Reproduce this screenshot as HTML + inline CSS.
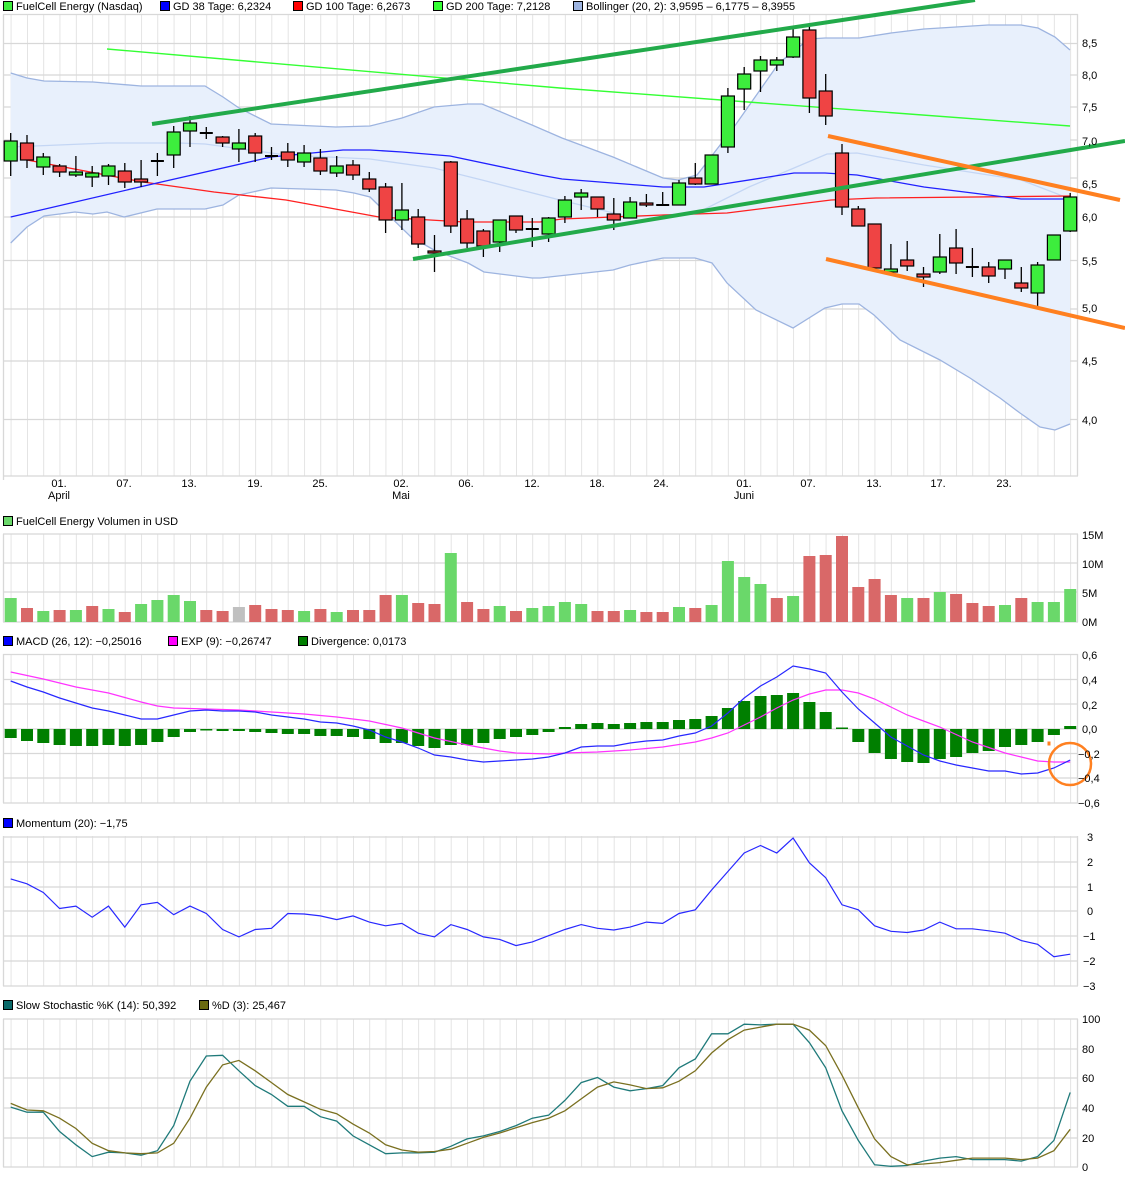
<!DOCTYPE html>
<html><head><meta charset="utf-8"><style>
html,body{margin:0;padding:0;background:#fff}
svg{display:block}
text{font-family:"Liberation Sans",sans-serif;font-size:11px;fill:#000}
.g{fill:#3ded3d;stroke:#000;stroke-width:1.2}
.r{fill:#ef4444;stroke:#000;stroke-width:1.2}
.vg{fill:#6ad86a}.vr{fill:#d96868}.vx{fill:#c0c0c0}
.hg{stroke:#d8d8d8;stroke-width:1.3}
.pl{fill:none}
</style></head><body>
<svg width="1125" height="1179" viewBox="0 0 1125 1179" xmlns="http://www.w3.org/2000/svg">
<defs>
<pattern id="vgrid" patternUnits="userSpaceOnUse" x="10.7" y="0" width="16.3" height="1179">
<rect x="-0.6" y="0" width="1.3" height="1179" fill="#d8d8d8"/>
</pattern>
</defs>

<!-- Legends -->
<g>
<rect x="3.5" y="1.5" width="9" height="9" fill="#3ded3d" stroke="#000"/><text x="16" y="10">FuelCell Energy (Nasdaq)</text>
<rect x="160.5" y="1.5" width="9" height="9" fill="#0000ff" stroke="#000"/><text x="173" y="10">GD 38 Tage: 6,2324</text>
<rect x="293.5" y="1.5" width="9" height="9" fill="#ff0000" stroke="#000"/><text x="306" y="10">GD 100 Tage: 6,2673</text>
<rect x="433.5" y="1.5" width="9" height="9" fill="#33ff33" stroke="#000"/><text x="446" y="10">GD 200 Tage: 7,2128</text>
<rect x="573.5" y="1.5" width="9" height="9" fill="#9db4e0" stroke="#000"/><text x="586" y="10">Bollinger (20, 2): 3,9595 – 6,1775 – 8,3955</text>

<rect x="3.5" y="516.5" width="9" height="9" fill="#6ad86a" stroke="#000"/><text x="16" y="525">FuelCell Energy Volumen in USD</text>

<rect x="3.5" y="636.5" width="9" height="9" fill="#0000ff" stroke="#000"/><text x="16" y="645">MACD (26, 12): −0,25016</text>
<rect x="168.5" y="636.5" width="9" height="9" fill="#ff00ff" stroke="#000"/><text x="181" y="645">EXP (9): −0,26747</text>
<rect x="298.5" y="636.5" width="9" height="9" fill="#007f00" stroke="#000"/><text x="311" y="645">Divergence: 0,0173</text>

<rect x="3.5" y="818.5" width="9" height="9" fill="#0000ff" stroke="#000"/><text x="16" y="827">Momentum (20): −1,75</text>

<rect x="3.5" y="1000.5" width="9" height="9" fill="#0a6a6a" stroke="#000"/><text x="16" y="1009">Slow Stochastic %K (14): 50,392</text>
<rect x="199.5" y="1000.5" width="9" height="9" fill="#6b6b10" stroke="#000"/><text x="212" y="1009">%D (3): 25,467</text>
</g>

<!-- Vertical grids -->
<rect x="3" y="14" width="1075" height="462" fill="url(#vgrid)"/>
<rect x="3" y="534" width="1075" height="88" fill="url(#vgrid)"/>
<rect x="3" y="654" width="1075" height="149" fill="url(#vgrid)"/>
<rect x="3" y="836" width="1075" height="150" fill="url(#vgrid)"/>
<rect x="3" y="1019" width="1075" height="148" fill="url(#vgrid)"/>

<!-- Horizontal grids + frames -->
<g class="hg">
<path d="M3 14.5H1078M3 43.5H1078M3 75H1078M3 107H1078M3 140H1078M3 178H1078M3 217H1078M3 260.5H1078M3 309H1078M3 361H1078M3 419.5H1078M3 476H1078M3.5 14V480M1077.5 14V476"/>
<path d="M3 534H1078M3 563H1078M3 592H1078M3 622H1078M3.5 534V622M1077.5 534V622"/>
<path d="M3 654.5H1078M3 679.5H1078M3 704H1078M3 729H1078M3 753.5H1078M3 778H1078M3 803H1078M3.5 654V803M1077.5 654V803"/>
<path d="M3 837H1078M3 862H1078M3 887H1078M3 911H1078M3 936H1078M3 961H1078M3 986H1078M3.5 836V986M1077.5 836V986"/>
<path d="M3 1019H1078M3 1049H1078M3 1078H1078M3 1108H1078M3 1138H1078M3 1167H1078M3.5 1019V1167M1077.5 1019V1167"/>
</g>

<!-- Bollinger -->
<polygon fill="#e8f0fc" points="10.7,73 27,78 44,81 93,82 141,86 205,86 223,97 239,108 271,124 336,127 370,126 402,118 434,107 468,104 482,104 532,125 562,138 613,157 663,178 678,180 697,175 734,127 779,63 809,39 825,38 859,38 891,33 924,29 988,25 1021,25 1038,28 1055,37 1070,50 1070,424 1055,430 1040,427 1020,413 1000,398 970,378 940,360 900,340 874,315 859,304 842,304 825,308 793,328 756,310 727,283 712,263 695,258 663,258 630,265 613,270 540,278 532,278 484,272 468,263 434,250 411,237 370,197 354,193 336,190 271,188 239,195 223,205 205,209 157,209 124,217 107,212 93,214 75,212 44,216 27,227 10.7,243"/>
<polyline class="pl" stroke="#9db4e0" stroke-width="1.3" points="10.7,73 27,78 44,81 93,82 141,86 205,86 223,97 239,108 271,124 336,127 370,126 402,118 434,107 468,104 482,104 532,125 562,138 613,157 663,178 678,180 697,175 734,127 779,63 809,39 825,38 859,38 891,33 924,29 988,25 1021,25 1038,28 1055,37 1070,50"/>
<polyline class="pl" stroke="#9db4e0" stroke-width="1.3" points="10.7,243 27,227 44,216 75,212 93,214 107,212 124,217 157,209 205,209 223,205 239,195 271,188 336,190 354,193 370,197 411,237 434,250 468,263 484,272 532,278 540,278 613,270 630,265 663,258 695,258 712,263 727,283 756,310 793,328 825,308 842,304 859,304 874,315 900,340 940,360 970,378 1000,398 1020,413 1040,427 1055,430 1070,424"/>
<polyline class="pl" stroke="#c4d6f4" stroke-width="1.3" points="10.7,147 107,143 179,143 205,144 286,155 370,159 434,168 482,180 560,200 630,217 697,213 749,187 794,168 827,154 857,153 924,165 1021,180 1055,193 1070,199"/>

<!-- Moving averages -->
<polyline class="pl" stroke="#33ff33" stroke-width="1.4" points="107,49 560,88 1070,126"/>
<polyline class="pl" stroke="#ff2020" stroke-width="1.3" points="27,160 143,182 214,192 286,200 379,217 464,222 540,222 562,219 663,215 727,213 831,200 876,198 1070,196"/>
<polyline class="pl" stroke="#2020ff" stroke-width="1.3" points="10.7,217 157,183 271,157 343,150 370,150 402,152 450,156 540,175 562,179 663,187 704,187 794,173 825,173 857,175 924,187 1021,199 1070,199"/>

<!-- Wicks -->
<path stroke="#000" stroke-width="1.3" fill="none" d="M10.7 133V176M27 135V168M43.3 153V175M59.6 164V177M75.9 156V177M92.2 166V187M108.5 164V185M124.8 163V188M141.1 160V187M157.4 153V176M173.7 126V168M190 116V147M206.3 127V139M222.6 136V147M238.9 129V162M255.2 133V162M271.5 147V160M287.8 143V167M304.1 145V167M320.4 149V175M336.7 156V177M353 160V180M369.3 172V192M385.6 183V233M401.9 183V230M418.2 209V248M434.5 235V272M450.8 161V233M467.1 210V248M483.4 229V257M499.7 220V252M516 216V233M532.3 218V247M548.6 217V242M564.9 196V223M581.2 189V210M597.5 197V217M613.8 198V230M630.1 197V218M646.4 194V207M662.7 192V206M679 180V205M695.3 163V185M711.6 155V184M727.9 88V153M744.2 67V110M760.5 56V92M776.8 57V71M793.1 29V58M809.4 23V113M825.7 74V125M842 144V215M858.3 206V226M874.6 224V268M890.9 244V272M907.2 241V271M923.5 267V287M939.8 234V274M956.1 229V274M972.4 248V277M988.7 262V283M1005 260V279M1021.3 267V292M1037.6 262V307M1053.9 235V260M1070.2 193V232"/>
<!-- Dojis -->
<path stroke="#000" stroke-width="2" d="M150.9 161H163.9M199.8 133H212.8M265 156H278M525.8 229H538.8M656.2 205H669.2M965.9 267H978.9"/>
<!-- Bodies -->
<g>
<rect class="g" x="4.2" y="141" width="13" height="20"/>
<rect class="r" x="20.5" y="143" width="13" height="17"/>
<rect class="g" x="36.8" y="157" width="13" height="10"/>
<rect class="r" x="53.1" y="166" width="13" height="6"/>
<rect class="g" x="69.4" y="172" width="13" height="3"/>
<rect class="g" x="85.7" y="173" width="13" height="4"/>
<rect class="g" x="102" y="166" width="13" height="10"/>
<rect class="r" x="118.3" y="171" width="13" height="11"/>
<rect class="r" x="134.6" y="179" width="13" height="3"/>
<rect class="g" x="167.2" y="132" width="13" height="23"/>
<rect class="g" x="183.5" y="123" width="13" height="8"/>
<rect class="r" x="216.1" y="137" width="13" height="6"/>
<rect class="g" x="232.4" y="143" width="13" height="6"/>
<rect class="r" x="248.7" y="136" width="13" height="17"/>
<rect class="r" x="281.3" y="152" width="13" height="8"/>
<rect class="g" x="297.6" y="153" width="13" height="9"/>
<rect class="r" x="313.9" y="158" width="13" height="13"/>
<rect class="g" x="330.2" y="166" width="13" height="7"/>
<rect class="r" x="346.5" y="165" width="13" height="10"/>
<rect class="r" x="362.8" y="179" width="13" height="10"/>
<rect class="r" x="379.1" y="187" width="13" height="33"/>
<rect class="g" x="395.4" y="210" width="13" height="10"/>
<rect class="r" x="411.7" y="217" width="13" height="27"/>
<rect class="r" x="428" y="251" width="13" height="2"/>
<rect class="r" x="444.3" y="162" width="13" height="64"/>
<rect class="r" x="460.6" y="219" width="13" height="24"/>
<rect class="r" x="476.9" y="231" width="13" height="15"/>
<rect class="g" x="493.2" y="220" width="13" height="22"/>
<rect class="r" x="509.5" y="216" width="13" height="14"/>
<rect class="g" x="542.1" y="218" width="13" height="16"/>
<rect class="g" x="558.4" y="200" width="13" height="17"/>
<rect class="g" x="574.7" y="193" width="13" height="4"/>
<rect class="r" x="591" y="197" width="13" height="12"/>
<rect class="r" x="607.3" y="214" width="13" height="6"/>
<rect class="g" x="623.6" y="202" width="13" height="16"/>
<rect class="r" x="639.9" y="203" width="13" height="2"/>
<rect class="g" x="672.5" y="183" width="13" height="22"/>
<rect class="r" x="688.8" y="178" width="13" height="6"/>
<rect class="g" x="705.1" y="155" width="13" height="29"/>
<rect class="g" x="721.4" y="96" width="13" height="51"/>
<rect class="g" x="737.7" y="74" width="13" height="15"/>
<rect class="g" x="754" y="60" width="13" height="11"/>
<rect class="g" x="770.3" y="60" width="13" height="5"/>
<rect class="g" x="786.6" y="37" width="13" height="20"/>
<rect class="r" x="802.9" y="30" width="13" height="68"/>
<rect class="r" x="819.2" y="91" width="13" height="25"/>
<rect class="r" x="835.5" y="153" width="13" height="54"/>
<rect class="r" x="851.8" y="209" width="13" height="17"/>
<rect class="r" x="868.1" y="224" width="13" height="44"/>
<rect class="g" x="884.4" y="269" width="13" height="3"/>
<rect class="r" x="900.7" y="260" width="13" height="6"/>
<rect class="r" x="917" y="274" width="13" height="3"/>
<rect class="g" x="933.3" y="257" width="13" height="15"/>
<rect class="r" x="949.6" y="248" width="13" height="15"/>
<rect class="r" x="982.2" y="267" width="13" height="9"/>
<rect class="g" x="998.5" y="260" width="13" height="9"/>
<rect class="r" x="1014.8" y="283" width="13" height="5"/>
<rect class="g" x="1031.1" y="265" width="13" height="28"/>
<rect class="g" x="1047.4" y="235" width="13" height="25"/>
<rect class="g" x="1063.7" y="197" width="13" height="34"/>
</g>

<!-- Trend lines -->
<g stroke-width="4" fill="none">
<line x1="152" y1="124" x2="975" y2="0" stroke="#22aa4a"/>
<line x1="413" y1="259" x2="1125" y2="141" stroke="#22aa4a"/>
<line x1="828" y1="136" x2="1120" y2="200" stroke="#ff8020"/>
<line x1="826" y1="259" x2="1125" y2="328" stroke="#ff8020"/>
</g>

<!-- Main y labels -->
<g>
<text x="1082" y="47">8,5</text><text x="1082" y="79">8,0</text><text x="1082" y="111">7,5</text><text x="1082" y="145">7,0</text>
<text x="1082" y="188">6,5</text><text x="1082" y="221">6,0</text><text x="1082" y="265">5,5</text><text x="1082" y="312">5,0</text>
<text x="1082" y="365">4,5</text><text x="1082" y="424">4,0</text>
</g>
<!-- X labels -->
<g text-anchor="middle">
<text x="59" y="487">01.</text><text x="59" y="499">April</text>
<text x="124" y="487">07.</text><text x="189" y="487">13.</text><text x="255" y="487">19.</text><text x="320" y="487">25.</text>
<text x="401" y="487">02.</text><text x="401" y="499">Mai</text>
<text x="466" y="487">06.</text><text x="532" y="487">12.</text><text x="597" y="487">18.</text><text x="661" y="487">24.</text>
<text x="744" y="487">01.</text><text x="744" y="499">Juni</text>
<text x="808" y="487">07.</text><text x="874" y="487">13.</text><text x="938" y="487">17.</text><text x="1004" y="487">23.</text>
</g>

<!-- Volume -->
<g>
<rect class="vg" x="4.7" y="598" width="12" height="24"/><rect class="vr" x="21" y="608" width="12" height="14"/><rect class="vg" x="37.3" y="611" width="12" height="11"/><rect class="vr" x="53.6" y="610" width="12" height="12"/><rect class="vg" x="69.9" y="610" width="12" height="12"/><rect class="vr" x="86.2" y="606" width="12" height="16"/><rect class="vg" x="102.5" y="609" width="12" height="13"/><rect class="vr" x="118.8" y="612" width="12" height="10"/><rect class="vg" x="135.1" y="604" width="12" height="18"/><rect class="vg" x="151.4" y="600" width="12" height="22"/>
<rect class="vg" x="167.7" y="595" width="12" height="27"/><rect class="vg" x="184" y="601" width="12" height="21"/><rect class="vr" x="200.3" y="610" width="12" height="12"/><rect class="vr" x="216.6" y="611" width="12" height="11"/><rect class="vx" x="232.9" y="607" width="12" height="15"/><rect class="vr" x="249.2" y="605" width="12" height="17"/><rect class="vr" x="265.5" y="609" width="12" height="13"/><rect class="vr" x="281.8" y="610" width="12" height="12"/><rect class="vg" x="298.1" y="611" width="12" height="11"/><rect class="vr" x="314.4" y="609" width="12" height="13"/>
<rect class="vg" x="330.7" y="612" width="12" height="10"/><rect class="vr" x="347" y="610" width="12" height="12"/><rect class="vr" x="363.3" y="610" width="12" height="12"/><rect class="vr" x="379.6" y="595" width="12" height="27"/><rect class="vg" x="395.9" y="595" width="12" height="27"/><rect class="vr" x="412.2" y="603" width="12" height="19"/><rect class="vr" x="428.5" y="604" width="12" height="18"/><rect class="vg" x="444.8" y="553" width="12" height="69"/><rect class="vr" x="461.1" y="602" width="12" height="20"/><rect class="vr" x="477.4" y="609" width="12" height="13"/>
<rect class="vg" x="493.7" y="606" width="12" height="16"/><rect class="vr" x="510" y="611" width="12" height="11"/><rect class="vg" x="526.3" y="608" width="12" height="14"/><rect class="vg" x="542.6" y="606" width="12" height="16"/><rect class="vg" x="558.9" y="602" width="12" height="20"/><rect class="vg" x="575.2" y="604" width="12" height="18"/><rect class="vr" x="591.5" y="611" width="12" height="11"/><rect class="vr" x="607.8" y="611" width="12" height="11"/><rect class="vg" x="624.1" y="610" width="12" height="12"/><rect class="vr" x="640.4" y="612" width="12" height="10"/>
<rect class="vr" x="656.7" y="612" width="12" height="10"/><rect class="vg" x="673" y="607" width="12" height="15"/><rect class="vr" x="689.3" y="608" width="12" height="14"/><rect class="vg" x="705.6" y="605" width="12" height="17"/><rect class="vg" x="721.9" y="561" width="12" height="61"/><rect class="vg" x="738.2" y="577" width="12" height="45"/><rect class="vg" x="754.5" y="584" width="12" height="38"/><rect class="vr" x="770.8" y="598" width="12" height="24"/><rect class="vg" x="787.1" y="596" width="12" height="26"/><rect class="vr" x="803.4" y="556" width="12" height="66"/>
<rect class="vr" x="819.7" y="555" width="12" height="67"/><rect class="vr" x="836" y="536" width="12" height="86"/><rect class="vr" x="852.3" y="587" width="12" height="35"/><rect class="vr" x="868.6" y="579" width="12" height="43"/><rect class="vr" x="884.9" y="595" width="12" height="27"/><rect class="vg" x="901.2" y="598" width="12" height="24"/><rect class="vr" x="917.5" y="598" width="12" height="24"/><rect class="vg" x="933.8" y="592" width="12" height="30"/><rect class="vr" x="950.1" y="594" width="12" height="28"/><rect class="vr" x="966.4" y="603" width="12" height="19"/>
<rect class="vr" x="982.7" y="606" width="12" height="16"/><rect class="vg" x="999" y="605" width="12" height="17"/><rect class="vr" x="1015.3" y="598" width="12" height="24"/><rect class="vg" x="1031.6" y="602" width="12" height="20"/><rect class="vg" x="1047.9" y="602" width="12" height="20"/><rect class="vg" x="1064.2" y="589" width="12" height="33"/>
</g>
<g><text x="1082" y="539">15M</text><text x="1082" y="568">10M</text><text x="1082" y="597">5M</text><text x="1082" y="626">0M</text></g>

<!-- MACD divergence -->
<g fill="#007f00">
<rect x="4.7" y="729" width="12" height="9"/><rect x="21" y="729" width="12" height="12"/><rect x="37.3" y="729" width="12" height="14"/><rect x="53.6" y="729" width="12" height="16"/><rect x="69.9" y="729" width="12" height="17"/><rect x="86.2" y="729" width="12" height="17"/><rect x="102.5" y="729" width="12" height="16"/><rect x="118.8" y="729" width="12" height="17"/><rect x="135.1" y="729" width="12" height="16"/><rect x="151.4" y="729" width="12" height="13"/>
<rect x="167.7" y="729" width="12" height="8"/><rect x="184" y="729" width="12" height="3"/><rect x="200.3" y="729" width="12" height="1.5"/><rect x="216.6" y="729" width="12" height="2"/><rect x="232.9" y="729" width="12" height="2"/><rect x="249.2" y="729" width="12" height="3"/><rect x="265.5" y="729" width="12" height="4"/><rect x="281.8" y="729" width="12" height="5"/><rect x="298.1" y="729" width="12" height="5"/><rect x="314.4" y="729" width="12" height="7"/>
<rect x="330.7" y="729" width="12" height="7"/><rect x="347" y="729" width="12" height="8"/><rect x="363.3" y="729" width="12" height="10"/><rect x="379.6" y="729" width="12" height="14"/><rect x="395.9" y="729" width="12" height="14"/><rect x="412.2" y="729" width="12" height="17"/><rect x="428.5" y="729" width="12" height="19"/><rect x="444.8" y="729" width="12" height="16"/><rect x="461.1" y="729" width="12" height="16"/><rect x="477.4" y="729" width="12" height="14"/>
<rect x="493.7" y="729" width="12" height="10"/><rect x="510" y="729" width="12" height="8"/><rect x="526.3" y="729" width="12" height="6"/><rect x="542.6" y="729" width="12" height="3"/><rect x="558.9" y="727" width="12" height="2"/><rect x="575.2" y="724" width="12" height="5"/><rect x="591.5" y="723" width="12" height="6"/><rect x="607.8" y="724" width="12" height="5"/><rect x="624.1" y="723" width="12" height="6"/><rect x="640.4" y="722" width="12" height="7"/>
<rect x="656.7" y="722" width="12" height="7"/><rect x="673" y="720" width="12" height="9"/><rect x="689.3" y="719" width="12" height="10"/><rect x="705.6" y="716" width="12" height="13"/><rect x="721.9" y="708" width="12" height="21"/><rect x="738.2" y="701" width="12" height="28"/><rect x="754.5" y="696" width="12" height="33"/><rect x="770.8" y="695" width="12" height="34"/><rect x="787.1" y="693" width="12" height="36"/><rect x="803.4" y="702" width="12" height="27"/>
<rect x="819.7" y="712" width="12" height="17"/><rect x="836" y="727.5" width="12" height="1.5"/><rect x="852.3" y="729" width="12" height="13"/><rect x="868.6" y="729" width="12" height="24"/><rect x="884.9" y="729" width="12" height="30"/><rect x="901.2" y="729" width="12" height="33"/><rect x="917.5" y="729" width="12" height="34"/><rect x="933.8" y="729" width="12" height="30"/><rect x="950.1" y="729" width="12" height="28"/><rect x="966.4" y="729" width="12" height="24"/>
<rect x="982.7" y="729" width="12" height="22"/><rect x="999" y="729" width="12" height="18"/><rect x="1015.3" y="729" width="12" height="16"/><rect x="1031.6" y="729" width="12" height="13"/><rect x="1047.9" y="729" width="12" height="6"/><rect x="1064.2" y="726" width="12" height="3"/>
</g>
<polyline class="pl" stroke="#ff33ff" stroke-width="1.2" points="10.7,672 27,675.5 43.3,679 59.6,683 75.9,687 92.2,690 108.5,693 124.8,697.5 141.1,702 157.4,706 173.7,708 190,708.5 206.3,709 222.6,709.5 238.9,710 255.2,711 271.5,712 287.8,713 304.1,714 320.4,715.5 336.7,717 353,719 369.3,721 385.6,724.5 401.9,728 418.2,733 434.5,738 450.8,741.5 467.1,745 483.4,748 499.7,751 516,753 532.3,753.5 548.6,754 564.9,753 581.2,752.5 597.5,752 613.8,751 630.1,750 646.4,748.5 662.7,747 679,744.5 695.3,742 711.6,738 727.9,733 744.2,725 760.5,717 776.8,708 793.1,700 809.4,694 825.7,690 842,690 858.3,693 874.6,699 890.9,707 907.2,715 923.5,721 939.8,727 956.1,734.5 972.4,742 988.7,747.5 1005,753 1021.3,757 1037.6,761 1053.9,762 1070.2,762"/>
<polyline class="pl" stroke="#2828ff" stroke-width="1.2" points="10.7,681 27,687 43.3,692 59.6,698 75.9,703 92.2,708 108.5,711 124.8,715 141.1,719 157.4,719 173.7,715 190,711 206.3,710 222.6,711 238.9,711 255.2,712 271.5,715 287.8,717 304.1,719 320.4,722 336.7,723 353,726 369.3,730 385.6,737 401.9,742 418.2,748 434.5,755 450.8,757 467.1,760 483.4,762 499.7,761 516,760 532.3,759 548.6,757 564.9,753 581.2,747 597.5,746 613.8,746 630.1,743 646.4,741 662.7,740 679,736 695.3,733 711.6,726 727.9,713 744.2,698 760.5,686 776.8,677 793.1,666 809.4,669 825.7,673 842,692 858.3,709 874.6,723 890.9,737 907.2,746 923.5,755 939.8,761 956.1,765 972.4,768 988.7,771 1005,771 1021.3,774 1037.6,773 1053.9,768 1070.2,760"/>
<circle cx="1070" cy="764" r="21" fill="none" stroke="#ff8020" stroke-width="2.5"/>
<rect x="1047.5" y="741.5" width="3" height="4" fill="#ff8020"/>
<g><text x="1082" y="659">0,6</text><text x="1082" y="684">0,4</text><text x="1082" y="709">0,2</text><text x="1082" y="733">0,0</text><text x="1078" y="758">−0,2</text><text x="1078" y="782">−0,4</text><text x="1078" y="807">−0,6</text></g>

<!-- Momentum -->
<polyline class="pl" stroke="#2828ff" stroke-width="1.2" points="10.7,878.9 27,883.8 43.3,892.5 59.6,908.5 75.9,906.1 92.2,917.2 108.5,906.1 124.8,927.1 141.1,904.8 157.4,902.4 173.7,914.7 190,906.1 206.3,913.5 222.6,929.5 238.9,936.9 255.2,929.5 271.5,928.3 287.8,913.5 304.1,914 320.4,915.9 336.7,919.6 353,915.9 369.3,922.1 385.6,925.8 401.9,923.4 418.2,933.2 434.5,936.9 450.8,924.6 467.1,929.5 483.4,936.9 499.7,939.4 516,945.6 532.3,941.9 548.6,935.7 564.9,929.5 581.2,924.6 597.5,928.3 613.8,930 630.1,927.1 646.4,922.1 662.7,923.4 679,913.5 695.3,909.8 711.6,890 727.9,871.5 744.2,853 760.5,845.5 776.8,853 793.1,838.1 809.4,862.8 825.7,877.7 842,904.8 858.3,909.8 874.6,925.8 890.9,931.3 907.2,932.5 923.5,930 939.8,922.1 956.1,928.8 972.4,928.8 988.7,930.8 1005,933.2 1021.3,940.6 1037.6,944.3 1053.9,956.7 1070.2,954.2"/>
<g><text x="1087" y="841">3</text><text x="1087" y="866">2</text><text x="1087" y="891">1</text><text x="1087" y="915">0</text><text x="1083" y="940">−1</text><text x="1083" y="965">−2</text><text x="1083" y="990">−3</text></g>

<!-- Stochastic -->
<polyline class="pl" stroke="#1f7a7a" stroke-width="1.3" points="10.7,1107.1 27,1112.2 43.3,1112.2 59.6,1131.5 75.9,1144.8 92.2,1156.6 108.5,1152.2 124.8,1152.9 141.1,1155.2 157.4,1150.7 173.7,1125.6 190,1081.2 206.3,1056 222.6,1055.3 238.9,1070.8 255.2,1085.6 271.5,1094.5 287.8,1106.3 304.1,1106.3 320.4,1116.7 336.7,1121.1 353,1135.9 369.3,1144.8 385.6,1153.7 401.9,1152.9 418.2,1152.9 434.5,1152.2 450.8,1146.3 467.1,1138.9 483.4,1135.9 499.7,1131.5 516,1125.6 532.3,1118.2 548.6,1115.2 564.9,1100.4 581.2,1082.6 597.5,1077.5 613.8,1087.1 630.1,1090.8 646.4,1088.6 662.7,1085.6 679,1067.8 695.3,1059 711.6,1033.8 727.9,1033.8 744.2,1024.2 760.5,1024.9 776.8,1024.2 793.1,1024.2 809.4,1042.7 825.7,1067.8 842,1110.8 858.3,1140.4 874.6,1164.8 890.9,1166.3 907.2,1165.5 923.5,1161.1 939.8,1158.1 956.1,1156.6 972.4,1159.6 988.7,1159.6 1005,1159.6 1021.3,1161.1 1037.6,1156.6 1053.9,1140.4 1070.2,1092.4"/>
<polyline class="pl" stroke="#7a7020" stroke-width="1.3" points="10.7,1103.4 27,1110 43.3,1110.8 59.6,1118.2 75.9,1128.5 92.2,1143.3 108.5,1150.7 124.8,1152.9 141.1,1153.7 157.4,1152.9 173.7,1143.3 190,1118.2 206.3,1087.1 222.6,1064.9 238.9,1060.4 255.2,1070.8 271.5,1082.6 287.8,1094.5 304.1,1101.9 320.4,1109.3 336.7,1113.7 353,1124.1 369.3,1133 385.6,1144.8 401.9,1150 418.2,1152.2 434.5,1151.5 450.8,1149.2 467.1,1143.3 483.4,1137.4 499.7,1133 516,1127.8 532.3,1122.6 548.6,1118.2 564.9,1110.8 581.2,1098.9 597.5,1087.1 613.8,1081.9 630.1,1084.9 646.4,1088.6 662.7,1087.8 679,1081.2 695.3,1070.8 711.6,1053 727.9,1039.7 744.2,1030.1 760.5,1027.1 776.8,1024.2 793.1,1024.2 809.4,1030.1 825.7,1045.6 842,1075.2 858.3,1107.8 874.6,1138.9 890.9,1156.6 907.2,1164.8 923.5,1164 939.8,1162.6 956.1,1160.3 972.4,1158.1 988.7,1158.1 1005,1158.1 1021.3,1159.6 1037.6,1158.1 1053.9,1150.7 1070.2,1129.3"/>
<g><text x="1082" y="1023">100</text><text x="1082" y="1053">80</text><text x="1082" y="1082">60</text><text x="1082" y="1112">40</text><text x="1082" y="1142">20</text><text x="1082" y="1171">0</text></g>
</svg>
</body></html>
